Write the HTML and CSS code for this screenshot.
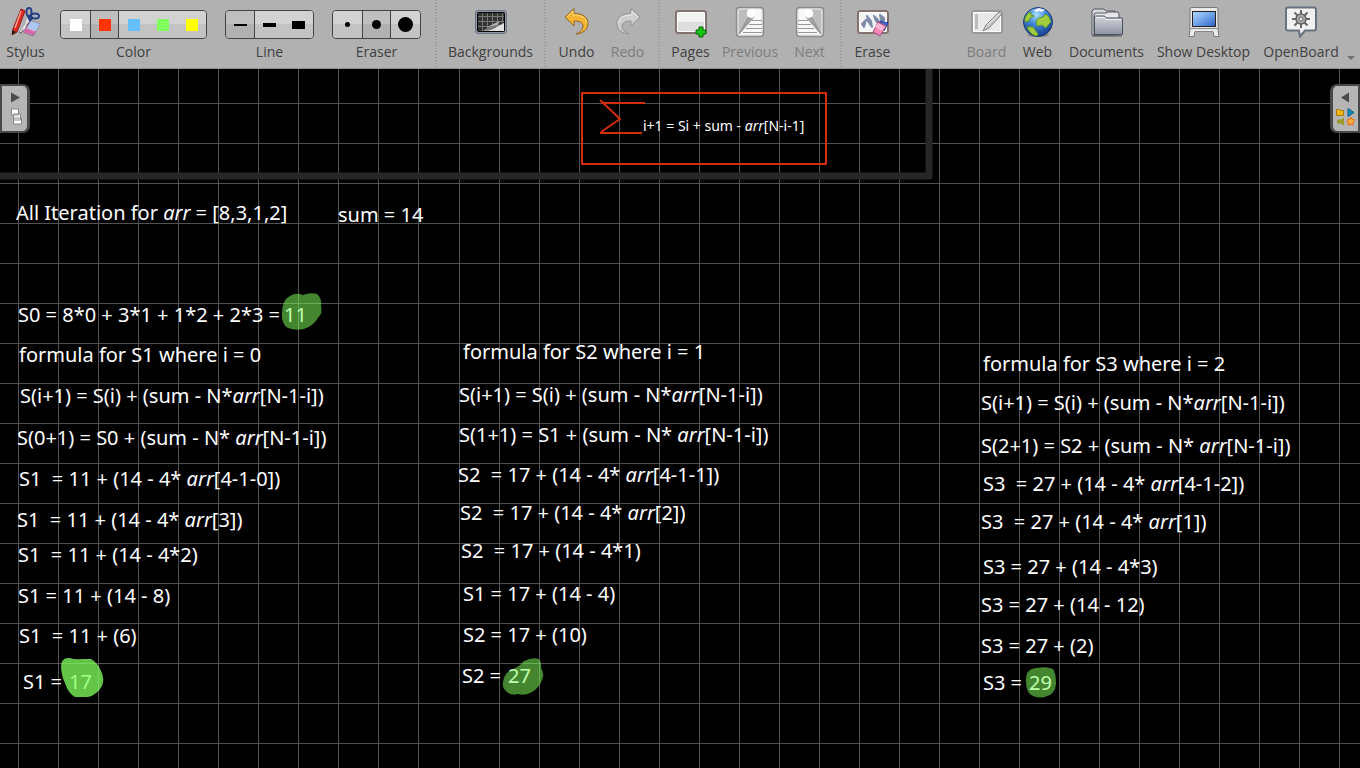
FILE: index.html
```html
<!DOCTYPE html>
<html lang="en">
<head>
<meta charset="utf-8">
<title>OpenBoard</title>
<link rel="stylesheet" href="styles.css">
</head>
<body>
<header class="toolbar">
  <button class="tool" type="button">
    <svg class="icon" viewBox="0 0 32 32" aria-hidden="true">
      <path d="M11 3l4 2-8 21-5 3 1-6z" fill="#e22a22" stroke="#8b1d18"/><path d="M11 5L5 22" stroke="#ff9c90" stroke-width="1.500"/><path d="M2 24l4 2-4 3z" fill="#222"/>
      <path d="M21 13L10 27" stroke="#666" stroke-width="3"/><path d="M20 13L10 26M18 12l-5 15" stroke="#e6e6e6" stroke-width="1.500"/>
      <ellipse cx="19" cy="6" rx="2.500" ry="4" fill="none" stroke="#243f86" stroke-width="2"/><ellipse cx="25" cy="10" rx="4" ry="2.500" fill="none" stroke="#243f86" stroke-width="2"/><path d="M18 10l2 4 3-3" fill="none" stroke="#243f86" stroke-width="2.500"/>
      <path d="M21 15l9 3-7 12-10-4z" fill="#efa2d0" stroke="#8b668c"/><path d="M21 15l9 3-4 7-9-3z" fill="#a9c8ef"/><path d="M14 26l9 3 2-3-9-4z" fill="#d667ab"/>
    </svg>
    <span class="label">Stylus</span>
  </button>

  <div class="tool-group" role="group" aria-labelledby="color-label">
    <div class="segments">
      <button class="segment" type="button" aria-label="White" aria-pressed="false"><span class="swatch white"></span></button>
      <button class="segment" type="button" aria-label="Red" aria-pressed="true"><span class="swatch red"></span></button>
      <button class="segment" type="button" aria-label="Blue" aria-pressed="false"><span class="swatch blue"></span></button>
      <button class="segment" type="button" aria-label="Green" aria-pressed="false"><span class="swatch green"></span></button>
      <button class="segment" type="button" aria-label="Yellow" aria-pressed="false"><span class="swatch yellow"></span></button>
    </div>
    <span class="label" id="color-label">Color</span>
  </div>

  <div class="tool-group" role="group" aria-labelledby="line-label">
    <div class="segments">
      <button class="segment" type="button" aria-label="Fine line" aria-pressed="true"><span class="stroke fine"></span></button>
      <button class="segment" type="button" aria-label="Medium line" aria-pressed="false"><span class="stroke medium"></span></button>
      <button class="segment" type="button" aria-label="Thick line" aria-pressed="false"><span class="stroke thick"></span></button>
    </div>
    <span class="label" id="line-label">Line</span>
  </div>

  <div class="tool-group" role="group" aria-labelledby="eraser-label">
    <div class="segments">
      <button class="segment" type="button" aria-label="Small eraser" aria-pressed="false"><span class="dot small"></span></button>
      <button class="segment" type="button" aria-label="Medium eraser" aria-pressed="true"><span class="dot middle"></span></button>
      <button class="segment" type="button" aria-label="Large eraser" aria-pressed="false"><span class="dot large"></span></button>
    </div>
    <span class="label" id="eraser-label">Eraser</span>
  </div>

  <span class="separator"></span>

  <button class="tool backgrounds" type="button">
    <svg class="icon" viewBox="0 0 32 32" aria-hidden="true">
      <rect x=".5" y="4.500" width="31" height="23" rx="2.500" fill="#9297a8" stroke="#6f7485"/>
      <rect x="2.500" y="6.500" width="27" height="19" rx="1" fill="#333" stroke="#000"/>
      <path d="M7.500 7v18M12.500 7v18M17.500 7v18M22.500 7v18M27.500 7v18M3 10.500h26M3 15.500h26M3 20.500h26" stroke="#777"/>
      <path d="M3 25c5 0 8-2 11-5l11-5-2 4 6-2v8z" fill="#777"/><path d="M5 25c8 0 14-1 18-5 2-1 4-1 6-3v8z" fill="#e2e2e2"/><path d="M12 21l13-6-3 4z" fill="#b5b5b5"/>
    </svg>
    <span class="label">Backgrounds</span>
  </button>

  <span class="separator"></span>

  <button class="tool" type="button">
    <svg class="icon" viewBox="0 0 32 32" aria-hidden="true">
      <path d="M4 11l9-8.500v5c8 0 14 3 14 10 0 6-5 10-12 10.500 5-2 7-5 7-8 0-3-3-5-9-5v5z" fill="#f5b333" stroke="#8c6524"/>
      <path d="M6 11l6-6v4c7 0 13 2 14 8" fill="none" stroke="#ffdc73"/>
    </svg>
    <span class="label">Undo</span>
  </button>
  <button class="tool" type="button" disabled>
    <svg class="icon" viewBox="0 0 32 32" aria-hidden="true">
      <path d="M28 11l-9-8.500v5C11 7.500 5 10.500 5 17.500c0 6 5 10 12 10.500-5-2-7-5-7-8 0-3 3-5 9-5v5z" fill="#cecece" stroke="#929292"/>
      <path d="M26 11l-6-6v4C13 9 7 11 6 17" fill="none" stroke="#e6e6e6"/>
    </svg>
    <span class="label">Redo</span>
  </button>

  <span class="separator"></span>

  <button class="tool" type="button">
    <svg class="icon" viewBox="0 0 32 32" aria-hidden="true">
      <rect x="1" y="5" width="30" height="22" rx="2.500" fill="#f1f3f2" stroke="#83726f" stroke-width="2"/>
      <path d="M3 16h26v9H3z" fill="#dedede"/><rect x="2.500" y="6.500" width="27" height="19" rx="1" fill="none" stroke="#fff"/>
      <path d="M24 21h4v3h3v4h-3v3h-4v-3h-3v-4h3z" fill="#14c914" stroke="#075f07"/>
    </svg>
    <span class="label">Pages</span>
  </button>
  <button class="tool previous" type="button" disabled>
    <svg class="icon" viewBox="0 0 32 32" aria-hidden="true">
      <rect x="2.500" y="1.500" width="27" height="29" rx="3" fill="#e3e3e3" stroke="#8b8b8b" stroke-width="1.500"/>
      <rect x="4.500" y="3.500" width="23" height="25" fill="#f8f8f8"/>
      <path d="M18 14.500h10M15 18.500h13M12 22.500h16M9 26.500h19" stroke="#999"/>
      <path d="M4.500 3.500H14v7l6 .5L4.500 28.500z" fill="#bdbdbd"/><path d="M14 12l6-1L5 28z" fill="#a4a4a4" stroke="#8d8d8d"/>
      <path d="M13 6c1-3 4-3 8-2.500 0 4-3 8.500-1 8.500-6 0-8-2-7-6z" fill="#fff"/>
    </svg>
    <span class="label">Previous</span>
  </button>
  <button class="tool" type="button" disabled>
    <svg class="icon" viewBox="0 0 32 32" aria-hidden="true">
      <rect x="2.500" y="1.500" width="27" height="29" rx="3" fill="#e3e3e3" stroke="#8b8b8b" stroke-width="1.500"/>
      <rect x="4.500" y="3.500" width="23" height="25" fill="#f8f8f8"/>
      <path d="M4 14.500h10M4 18.500h13M4 22.500h16M4 26.500h19" stroke="#999"/>
      <path d="M27.500 3.500H18v7l-6 .5 15.500 17.500z" fill="#bdbdbd"/><path d="M18 12l-6-1 15 17z" fill="#a4a4a4" stroke="#8d8d8d"/>
      <path d="M19 6c-1-3-4-3-8-2.500 0 4 3 8.500 1 8.500 6 0 8-2 7-6z" fill="#fff"/>
    </svg>
    <span class="label">Next</span>
  </button>

  <span class="separator"></span>

  <button class="tool" type="button">
    <svg class="icon" viewBox="0 0 32 32" aria-hidden="true">
      <rect x="1" y="5" width="30" height="22" rx="2.500" fill="#f4f4f4" stroke="#83726f" stroke-width="2"/>
      <rect x="2.500" y="6.500" width="27" height="19" rx="1" fill="none" stroke="#fff"/>
      <path d="M5 18l4-4-2 7zM10 10l4 5 1 6-4-6zM17 10l4 4 3 5-5-4zM23 9l4 3v5l-3-3z" fill="#7e8aa8" stroke="#7e8aa8" stroke-width="2" stroke-linejoin="round"/>
      <path d="M23 15l6 2 2-2-1 4-3 6z" fill="#4469d4" stroke="#2744ac"/><path d="M21 16l8 4-6 10-7-4z" fill="#f387b9" stroke="#a24d78"/><path d="M21 17l7 4-3 4-7-4z" fill="#ffb6d6"/>
    </svg>
    <span class="label">Erase</span>
  </button>

  <div class="toolbar-end">
    <button class="tool" type="button" disabled>
      <svg class="icon" viewBox="0 0 32 32" aria-hidden="true">
        <rect x="1" y="5" width="30" height="22" rx="2.500" fill="#e9e9e9" stroke="#999" stroke-width="2"/><rect x="2.500" y="6.500" width="27" height="19" fill="none" stroke="#fff"/>
        <rect x="4" y="8" width="3" height="15" fill="#bbb"/><path d="M12 25l3-6L28 6l3 2-13 14z" fill="#c8c8c8" stroke="#858585"/><path d="M16 19L29 7" stroke="#eee"/>
      </svg>
      <span class="label">Board</span>
    </button>
    <button class="tool" type="button">
      <svg class="icon" viewBox="0 0 32 32" aria-hidden="true">
        <defs><radialGradient id="sea" cx=".45" cy=".25" r=".75"><stop offset="0" stop-color="#a9dcff"/><stop offset=".45" stop-color="#3f86d8"/><stop offset="1" stop-color="#163a8c"/></radialGradient></defs>
        <ellipse cx="16" cy="29" rx="11" ry="2" fill="#888"/>
        <circle cx="16" cy="16" r="14.500" fill="url(#sea)" stroke="#20386f"/>
        <path d="M3 12c1-3 3-5 6-6l0 3 3 1-4 2-1 3-4 1zM17 12l4-1 3-3 3 3 2 5-3 3-2 3-4-3-5 1-1-5zM5 21h6l5 7-1 2c-5-1-8-4-10-9z" fill="#a1cc3e" stroke="#5c9629"/>
        <path d="M12 4l5-2 6 2-3 2-3-1-3 1z" fill="#edf6ff"/>
      </svg>
      <span class="label">Web</span>
    </button>
    <button class="tool documents" type="button">
      <svg class="icon" viewBox="0 0 32 32" aria-hidden="true">
        <defs><linearGradient id="folder" x2="0" y2="1"><stop stop-color="#d5d7de"/><stop offset="1" stop-color="#8e93a3"/></linearGradient></defs>
        <path d="M1 29V5l2-2h10l2 2h9v24z" fill="#d6d7db" stroke="#55585f"/>
        <path d="M3 29V8l2-1h10l2-1h10l1 2v21z" fill="#e6e7ea" stroke="#55585f"/>
        <path d="M3.500 28.500V11q0-1 1-1h9l2 2h15q1 0 1 1v15.500z" fill="url(#folder)" stroke="#4c505b"/><path d="M5 11.500h8l2 2h15" fill="none" stroke="#eff0f4"/>
        <path d="M1 30h30" stroke="#555"/>
      </svg>
      <span class="label">Documents</span>
    </button>
    <button class="tool show-desktop" type="button">
      <svg class="icon" viewBox="0 0 32 32" aria-hidden="true">
        <defs><linearGradient id="screen" x2="1" y2="1"><stop stop-color="#b3d5fb"/><stop offset=".5" stop-color="#70a3e9"/><stop offset="1" stop-color="#2e61bd"/></linearGradient></defs>
        <path d="M1 30.500L2 23V3q0-1.500 2-1.500h24Q30 1.500 30 3v20l1 7.500h-5l-1-5H7l-1 5z" fill="#e9e9e9" stroke="#777"/>
        <path d="M3 22.500h26M7 25.500h18" stroke="#888"/><rect x="4.500" y="5.500" width="23" height="15" fill="url(#screen)" stroke="#222"/>
      </svg>
      <span class="label">Show Desktop</span>
    </button>
    <button class="tool openboard" type="button">
      <svg class="icon" viewBox="0 0 32 32" aria-hidden="true">
        <path d="M3 1.500h26q2 0 2 2v19q0 2-2 2h-9l-5 6-1-6H3q-2 0-2-2v-19q0-2 2-2z" fill="#f1f1f1" stroke="#69707f" stroke-width="2"/>
        <path d="M16 4v18M7 13h18M9.500 6.500l13 13M22.500 6.500l-13 13" stroke="#666" stroke-width="2"/>
        <circle cx="16" cy="13" r="5" fill="#aaa" stroke="#666" stroke-width="1.500"/><circle cx="16" cy="13" r="2" fill="#eee" stroke="#666"/>
      </svg>
      <span class="label">OpenBoard</span>
    </button>
    <button class="more" type="button" aria-label="More tools"><svg class="more-icon" viewBox="0 0 8 4" aria-hidden="true"><path d="M0 0h8L4 4z" fill="#707070"/></svg></button>
  </div>
</header>

<main class="board">
  <svg class="canvas" role="group" aria-label="Whiteboard">
    <defs>
      <pattern id="grid-left" x="18" y="34" width="40" height="40" patternUnits="userSpaceOnUse"><path d="M.5 0v40M0 .5h40" stroke="#525252"/></pattern>
      <pattern id="grid-right" x="19" y="34" width="40" height="40" patternUnits="userSpaceOnUse"><path d="M.5 0v40M0 .5h40" stroke="#525252"/></pattern>
    </defs>
    <rect width="440" height="100%" fill="url(#grid-left)"/>
    <rect x="440" width="100%" height="100%" fill="url(#grid-right)"/>

    <path d="M0 107H929V0" fill="none" stroke="#272727" stroke-width="7" stroke-linejoin="round"/>

    <g fill="none" stroke="#d42d08" stroke-width="2" stroke-linejoin="round">
      <path d="M582 24H826V95H582z"/>
      <path d="M645 34H601M600 31L620 50L601 63M600 64H642"/>
    </g>
    <text class="ink ink-small" x="643" y="62">i+1 = Si + sum - <tspan class="slant">arr</tspan>[N-i-1]</text>

    <g class="ink">
      <text x="16" y="151">All Iteration for <tspan class="slant">arr</tspan> = [8,3,1,2]</text>
      <text x="338" y="153">sum = 14</text>

      <text x="18" y="253">S0 = 8*0 + 3*1 + 1*2 + 2*3 = <tspan x="284">11</tspan></text>
      <text x="19" y="293">formula for S1 where i = 0</text>
      <text x="20" y="334">S(i+1) = S(i) + (sum - N*<tspan class="slant">arr</tspan>[N-1-i])</text>
      <text x="17" y="376">S(0+1) = S0 + (sum - N* <tspan class="slant">arr</tspan>[N-1-i])</text>
      <text x="19" y="417">S1&nbsp; = 11 + (14 - 4* <tspan class="slant">arr</tspan>[4-1-0])</text>
      <text x="17" y="458">S1&nbsp; = 11 + (14 - 4* <tspan class="slant">arr</tspan>[3])</text>
      <text x="18" y="493">S1&nbsp; = 11 + (14 - 4*2)</text>
      <text x="18" y="534">S1 = 11 + (14 - 8)</text>
      <text x="19" y="574">S1&nbsp; = 11 + (6)</text>
      <text x="23" y="620">S1 = <tspan x="69">17</tspan></text>

      <text x="463" y="290">formula for S2 where i = 1</text>
      <text x="459" y="333">S(i+1) = S(i) + (sum - N*<tspan class="slant">arr</tspan>[N-1-i])</text>
      <text x="459" y="373">S(1+1) = S1 + (sum - N* <tspan class="slant">arr</tspan>[N-1-i])</text>
      <text x="458" y="413">S2&nbsp; = 17 + (14 - 4* <tspan class="slant">arr</tspan>[4-1-1])</text>
      <text x="460" y="451">S2&nbsp; = 17 + (14 - 4* <tspan class="slant">arr</tspan>[2])</text>
      <text x="461" y="489">S2&nbsp; = 17 + (14 - 4*1)</text>
      <text x="463" y="532">S1 = 17 + (14 - 4)</text>
      <text x="463" y="573">S2 = 17 + (10)</text>
      <text x="462" y="614">S2 = <tspan x="508">27</tspan></text>

      <text x="983" y="302">formula for S3 where i = 2</text>
      <text x="981" y="341">S(i+1) = S(i) + (sum - N*<tspan class="slant">arr</tspan>[N-1-i])</text>
      <text x="981" y="384">S(2+1) = S2 + (sum - N* <tspan class="slant">arr</tspan>[N-1-i])</text>
      <text x="983" y="422">S3&nbsp; = 27 + (14 - 4* <tspan class="slant">arr</tspan>[4-1-2])</text>
      <text x="981" y="460">S3&nbsp; = 27 + (14 - 4* <tspan class="slant">arr</tspan>[1])</text>
      <text x="983" y="505">S3 = 27 + (14 - 4*3)</text>
      <text x="981" y="543">S3 = 27 + (14 - 12)</text>
      <text x="981" y="584">S3 = 27 + (2)</text>
      <text x="983" y="621">S3 = <tspan x="1029">29</tspan></text>
    </g>

    <g fill="#82ff5c" fill-opacity=".52">
      <path d="M282 244Q282 231 290 227Q296 223 303 226Q310 223 317 225Q322 229 321 237Q323 244 318 249Q313 257 304 260Q296 262 288 259Q281 255 282 244z"/>
      <path fill-opacity=".77" d="M61 598Q61 588 70 589Q75 591 82 590H91Q98 594 101 602Q105 610 102 617Q97 626 88 628H75Q68 624 65 614Q62 609 61 598z"/>
      <path d="M503 613Q504 604 513 600Q519 598 524 592Q532 588 539 590Q542 594 541 599Q545 605 542 611Q539 619 532 623Q526 627 518 625Q509 627 505 621Q502 618 503 613z"/>
      <path d="M1026 613Q1025 600 1036 599Q1047 597 1053 600Q1056 604 1056 615Q1055 625 1047 627Q1041 630 1033 627Q1026 624 1026 613z"/>
    </g>
  </svg>

  <button class="tab tab-left" type="button" aria-label="Show page list">
    <svg class="tab-icon" viewBox="0 0 24 44" aria-hidden="true">
      <path d="M9 6l9 5-9 5z" fill="#4b4b4b"/>
      <path d="M9.500 22.500h7v6h-7zM11.500 27.500h7v6h-7zM11.500 31.500h8v6h-8z" fill="#fff" stroke="#888"/>
    </svg>
  </button>
  <button class="tab tab-right" type="button" aria-label="Show library">
    <svg class="tab-icon" viewBox="0 0 24 44" aria-hidden="true">
      <path d="M16 6L8 11l8 5z" fill="#4b4b4b"/>
      <path d="M3.500 23h3l1 1h3v5h-7z" fill="#efb816" stroke="#a87a0b"/><path d="M15 22l6 4-6 4z" fill="#118ab8" stroke="#075f86"/>
      <path d="M11 31v8l-3-2H4v-4h4z" fill="#9a9a26"/><path d="M18 30.500l1 2 3 1-2 2v3l-2-1-3 1v-3l-1-2 3-1z" fill="#ffae45" stroke="#ec6a13"/>
    </svg>
  </button>
</main>
</body>
</html>
```
FILE: styles.css
```css
* {
  box-sizing: border-box;
}

body {
  margin: 0;
  min-height: 100vh;
  display: flex;
  flex-direction: column;
  overflow: hidden;
  background: #000;
  color: #404040;
  font-family: "Open Sans", "Noto Sans", sans-serif;
  font-size: 14px;
}

button {
  margin: 0;
  padding: 0;
  border: 0;
  background: none;
  color: inherit;
  font: inherit;
}

.toolbar {
  display: flex;
  flex: none;
  padding-bottom: 6px;
  border-bottom: 1px solid #8f8f8f;
  background: #b1b1b1;
}

.tool,
.tool-group {
  display: flex;
  flex: none;
  flex-direction: column;
  align-items: center;
  gap: 4px;
  padding-top: 6px;
}

.tool {
  width: 51px;
}

.tool:disabled {
  color: #7d7d7d;
}

.backgrounds {
  width: 97px;
}

.previous {
  width: 68px;
}

.documents {
  width: 87px;
}

.show-desktop {
  width: 107px;
}

.openboard {
  width: 88px;
}

.tool-group {
  padding-right: 9px;
  padding-left: 9px;
}

.icon {
  display: block;
  width: 32px;
  height: 32px;
}

.label {
  line-height: 20px;
  white-space: nowrap;
}

.segments {
  display: flex;
  height: 29px;
  margin-top: 4px;
  margin-bottom: -1px;
  border: 1px solid #434343;
  border-radius: 4px;
  overflow: hidden;
}

.segment {
  display: flex;
  align-items: center;
  justify-content: center;
  width: 29px;
  background: linear-gradient(#d2d2d2 50%, #c3c3c3 50%);
}

.segment[aria-pressed="true"] {
  background: linear-gradient(#bfbfbf 50%, #b1b1b1 50%);
  border-left: 1px solid #434343;
  border-right: 1px solid #434343;
}

.segment:first-child {
  border-left: 0;
}

.swatch {
  width: 12px;
  height: 12px;
}

.white { background: #fff; }
.red { background: #ff3400; }
.blue { background: #66c0ff; }
.green { background: #81ff5c; }
.yellow { background: #ff0; }

.stroke {
  width: 13px;
  background: #000;
}

.fine { height: 2px; }
.medium { height: 4px; }
.thick { height: 8px; }

.dot {
  border-radius: 50%;
  background: #000;
}

.small { width: 5px; height: 5px; }
.middle { width: 9px; height: 9px; }
.large { width: 15px; height: 15px; }

.separator {
  flex: none;
  width: 12px;
  margin-bottom: -6px;
  background: repeating-linear-gradient(#999 0 1px, #b1b1b1 1px 3px) center / 2px 100% no-repeat;
}

.toolbar-end {
  display: flex;
  margin-left: auto;
}

.more {
  display: flex;
  align-items: flex-end;
  width: 15px;
  padding: 0 5px 2px 2px;
}

.more-icon {
  width: 8px;
  height: 4px;
}

.board {
  position: relative;
  display: flex;
  flex: 1;
}

.canvas {
  flex: 1;
  width: 100%;
}

.ink {
  fill: #fff;
  font-family: "Noto Sans", sans-serif;
  font-size: 20px;
}

.ink-small {
  font-size: 14px;
}

.slant {
  font-style: italic;
}

.tab {
  position: absolute;
  top: 15px;
  width: 30px;
  padding: 0;
  border: 2px solid #484848;
  background: #b5b5b5;
}

.tab-left {
  left: 0;
  border-right-width: 3px;
  border-radius: 0 7px 7px 0;
}

.tab-right {
  right: 0;
  border-left-width: 3px;
  border-radius: 7px 0 0 7px;
}

.tab-icon {
  display: block;
  width: 24px;
  height: 45px;
}
```
